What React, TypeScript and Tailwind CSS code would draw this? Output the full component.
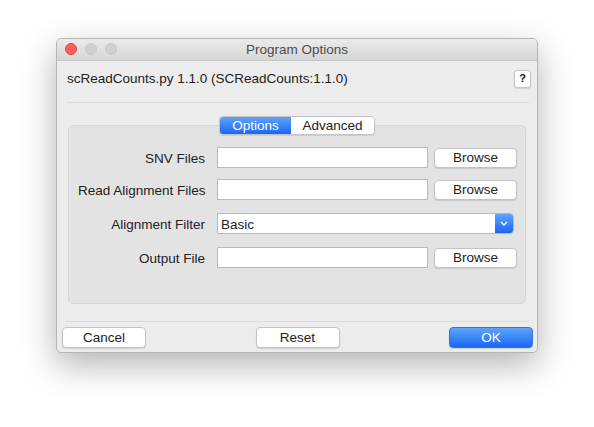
import React from "react";

const font = { fontFamily: '"Liberation Sans", Arial, sans-serif' };

function MacButton({ label, className = "" }: { label: string; className?: string }) {
  return (
    <button
      className={`h-[20px] rounded-[4px] border border-[#c3c3c3] bg-white text-[13.5px] leading-none text-[#222] shadow-[0_1px_1px_rgba(0,0,0,0.12)] ${className}`}
    >
      {label}
    </button>
  );
}

function Row({ label, className = "", children }: { label: string; className?: string; children: React.ReactNode }) {
  return (
    <div className={`flex h-[21px] items-center ${className}`}>
      <span className="w-[127px] translate-y-[2px] whitespace-nowrap text-right text-[13.5px] text-[#222]">{label}</span>
      <div className="ml-[12px] flex items-center">{children}</div>
    </div>
  );
}

export default function App() {
  return (
    <div className="min-h-[427px] w-[594px] bg-white pl-[56px] pt-[38px]" style={font}>
      <div className="flex w-[482px] flex-col overflow-hidden rounded-[5px] border border-[#b5b5b5] bg-[#ececec] shadow-[0_12px_34px_rgba(0,0,0,0.3)]">
        {/* title bar */}
        <div className="relative flex h-[22px] items-center justify-center border-b border-[#c6c6c6] bg-gradient-to-b from-[#ebebeb] to-[#d6d6d6]">
          <div className="absolute left-[8px] top-[4px] flex gap-[8px]">
            <span className="h-[12px] w-[12px] rounded-full border border-[#e2463f] bg-[#fe5f57]" />
            <span className="h-[12px] w-[12px] rounded-full border border-[#c8c8c8] bg-[#d0d0d0]" />
            <span className="h-[12px] w-[12px] rounded-full border border-[#c8c8c8] bg-[#d0d0d0]" />
          </div>
          <span className="translate-y-px text-[13.5px] text-[#4c4c4c]">Program Options</span>
        </div>

        {/* header */}
        <div className="flex h-[35px] items-center justify-between pl-[10px] pr-[6px]">
          <span className="translate-y-px whitespace-nowrap text-[13.5px] text-[#222]">scReadCounts.py 1.1.0 (SCReadCounts:1.1.0)</span>
          <button className="flex h-[18px] w-[17px] items-center justify-center rounded-[3px] border border-[#c3c3c3] bg-white text-[11px] font-bold text-[#111] shadow-[0_1px_1px_rgba(0,0,0,0.12)]">
            ?
          </button>
        </div>
        <div className="ml-[10px] mr-[8px] mt-[6px] h-px bg-[#dadada]" />

        {/* tabs + group */}
        <div className="mt-[13px] flex flex-col px-[11px]">
          <div className="relative z-10 flex justify-center">
            <div className="flex h-[19px] overflow-hidden rounded-[4px] border border-[#c3c3c3] shadow-[0_1px_1px_rgba(0,0,0,0.1)]">
              <span className="flex w-[71px] items-center justify-center bg-gradient-to-b from-[#5ea3fb] to-[#1a66f5] pt-px text-[13.5px] text-white">
                Options
              </span>
              <span className="flex w-[83px] items-center justify-center bg-white pt-px text-[13.5px] text-[#222]">
                Advanced
              </span>
            </div>
          </div>
          <div className="-mt-[10px] flex h-[179px] flex-col rounded-[5px] border border-[#d6d6d6] bg-[#e3e3e3] pl-[9px] pt-[21px]">
            <Row label="SNV Files">
              <div className="h-[21px] w-[211px] border border-[#b8b8b8] bg-white" />
              <MacButton label="Browse" className="ml-[6px] mt-px w-[83px]" />
            </Row>
            <Row label="Read Alignment Files" className="mt-[11px]">
              <div className="h-[21px] w-[211px] border border-[#b8b8b8] bg-white" />
              <MacButton label="Browse" className="ml-[6px] mt-px w-[83px]" />
            </Row>
            <Row label="Alignment Filter" className="mt-[13px]">
              <div className="flex h-[21px] w-[297px] overflow-hidden rounded-r-[4px] border border-[#b8b8b8] bg-white">
                <span className="flex flex-1 items-center pl-[3px] pt-[3px] text-[13.5px] text-[#222]">Basic</span>
                <span className="flex w-[18px] items-center justify-center bg-gradient-to-b from-[#5ea3fb] to-[#1a66f5]">
                  <svg width="8" height="5" viewBox="0 0 8 5" fill="none">
                    <path d="M1 1l3 3 3-3" stroke="white" strokeWidth="1.4" />
                  </svg>
                </span>
              </div>
            </Row>
            <Row label="Output File" className="mt-[13px]">
              <div className="h-[21px] w-[211px] border border-[#b8b8b8] bg-white" />
              <MacButton label="Browse" className="ml-[6px] mt-px w-[83px]" />
            </Row>
          </div>
        </div>

        {/* footer */}
        <div className="ml-[8px] mr-[8px] mt-[17px] h-px bg-[#dadada]" />
        <div className="flex items-center justify-between pb-[4px] pl-[5px] pr-[4px] pt-[5px]">
          <MacButton label="Cancel" className="h-[21px] w-[84px]" />
          <MacButton label="Reset" className="h-[21px] w-[84px]" />
          <button className="h-[21px] w-[84px] rounded-[4px] border border-[#2f73e6] bg-gradient-to-b from-[#5ea3fb] to-[#1a66f5] text-[13.5px] text-white shadow-[0_1px_1px_rgba(0,0,0,0.12)]">
            OK
          </button>
        </div>
      </div>
    </div>
  );
}
